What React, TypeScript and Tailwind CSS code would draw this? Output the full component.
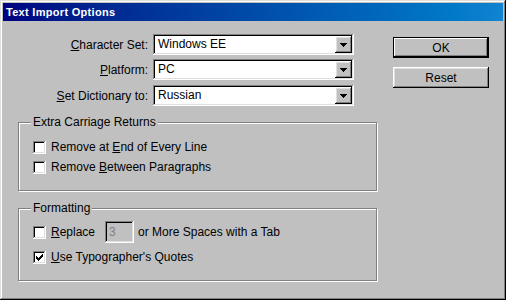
import React from "react";

const raised = "shadow-[inset_-1px_-1px_#000,inset_1px_1px_#fff,inset_-2px_-2px_#808080,inset_2px_2px_#dfdfdf]";
const sunken = "shadow-[inset_-1px_-1px_#fff,inset_1px_1px_#808080,inset_-2px_-2px_#dfdfdf,inset_2px_2px_#000]";

const Arrow = () => (
  <svg width="7" height="4" shapeRendering="crispEdges">
    <rect x="0" y="0" width="7" height="1" />
    <rect x="1" y="1" width="5" height="1" />
    <rect x="2" y="2" width="3" height="1" />
    <rect x="3" y="3" width="1" height="1" />
  </svg>
);

const Combo = ({ value }: { value: string }) => (
  <div className={`flex h-[21px] w-[201px] bg-white p-[2px] ${sunken}`}>
    <div className="flex-1 pl-[3px] leading-[17px]">{value}</div>
    <div className={`flex w-[17px] items-center justify-center bg-[#c0c0c0] ${raised}`}>
      <Arrow />
    </div>
  </div>
);

const Check = ({ checked }: { checked?: boolean }) => (
  <div className={`relative h-[13px] w-[13px] shrink-0 bg-white ${sunken}`}>
    {checked && (
      <svg className="absolute left-[3px] top-[3px]" width="7" height="7" shapeRendering="crispEdges">
        <rect x="6" y="0" width="1" height="1" />
        <rect x="5" y="1" width="2" height="1" />
        <rect x="0" y="2" width="1" height="1" />
        <rect x="4" y="2" width="3" height="1" />
        <rect x="0" y="3" width="2" height="1" />
        <rect x="3" y="3" width="3" height="1" />
        <rect x="0" y="4" width="5" height="1" />
        <rect x="1" y="5" width="3" height="1" />
        <rect x="2" y="6" width="1" height="1" />
      </svg>
    )}
  </div>
);

const Group = ({ title, className, children }: { title: string; className: string; children: React.ReactNode }) => (
  <div className={`relative w-[359px] border border-[#808080] shadow-[1px_1px_0_#fff,inset_1px_1px_0_#fff] ${className}`}>
    <span className="absolute left-[12px] top-[-8px] bg-[#c0c0c0] px-[2px] leading-[14px]">{title}</span>
    {children}
  </div>
);

export default function App() {
  return (
    <div className="flex h-[300px] w-[506px] flex-col bg-[#c0c0c0] p-[3px] text-[12px] text-black font-['Liberation_Sans',Arial,sans-serif] shadow-[inset_-1px_-1px_#000,inset_1px_1px_#dfdfdf,inset_-2px_-2px_#808080,inset_2px_2px_#fff]">
      {/* title */}
      <div className="flex h-[18px] items-center bg-linear-to-r from-[#000080] to-[#1084d0] pl-[3px] text-[11px] font-bold tracking-[0.3px] text-white">
        Text Import Options
      </div>

      <div className="flex flex-1">
        {/* left */}
        <div className="w-[375px] pl-[15px] pt-[13px]">
          <div className="flex flex-col gap-[4px]">
            <div className="flex items-center">
              <span className="w-[130px] text-right"><u>C</u>haracter Set:</span>
              <div className="ml-[5px]"><Combo value="Windows EE" /></div>
            </div>
            <div className="flex items-center">
              <span className="w-[130px] text-right"><u>P</u>latform:</span>
              <div className="ml-[5px]"><Combo value="PC" /></div>
            </div>
            <div className="mt-[1px] flex items-center">
              <span className="w-[130px] text-right"><u>S</u>et Dictionary to:</span>
              <div className="ml-[5px]"><Combo value="Russian" /></div>
            </div>
          </div>

          <Group title="Extra Carriage Returns" className="mt-[16px] h-[69px] pl-[14px] pt-[14px]">
            <div className="flex h-[20px] items-center gap-[5px]">
              <Check />
              <span>Remove at <u>E</u>nd of Every Line</span>
            </div>
            <div className="flex h-[20px] items-center gap-[5px]">
              <Check />
              <span>Remove <u>B</u>etween Paragraphs</span>
            </div>
          </Group>

          <Group title="Formatting" className="mt-[17px] h-[73px] pl-[14px] pt-[12px]">
            <div className="flex h-[22px] items-center">
              <Check />
              <span className="ml-[5px]"><u>R</u>eplace</span>
              <div className={`ml-[10px] h-[22px] w-[29px] bg-[#c0c0c0] pl-[4px] leading-[22px] text-[#808080] ${sunken}`}>3</div>
              <span className="ml-[4px]">or More Spaces with a Tab</span>
            </div>
            <div className="mt-[3px] flex h-[22px] items-center gap-[5px]">
              <Check checked />
              <span><u>U</u>se Typographer's Quotes</span>
            </div>
          </Group>
        </div>

        {/* right */}
        <div className="ml-[15px] flex flex-col pt-[16px]">
          <button className="h-[21px] w-[96px] border border-black bg-[#c0c0c0] shadow-[inset_-1px_-1px_#000,inset_1px_1px_#fff,inset_-2px_-2px_#808080]">
            OK
          </button>
          <button className={`mt-[9px] h-[21px] w-[96px] bg-[#c0c0c0] ${raised}`}>Reset</button>
        </div>
      </div>
    </div>
  );
}
